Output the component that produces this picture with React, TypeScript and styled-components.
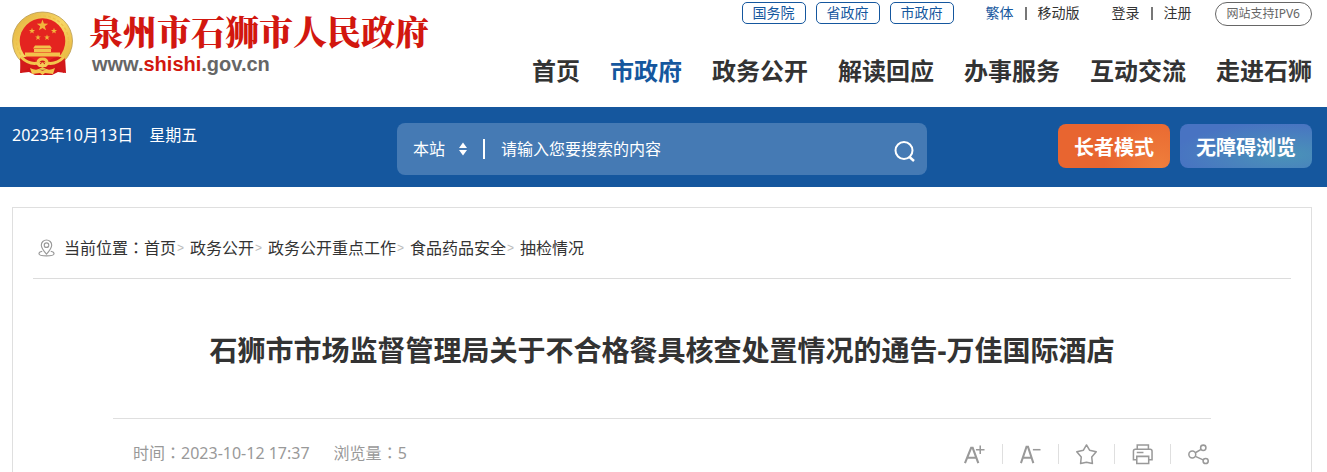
import React from "react";
import styled, { createGlobalStyle } from "styled-components";

const BLUE = "#15579e";

const GlobalStyle = createGlobalStyle`
  * { box-sizing: border-box; }
  body {
    margin: 0;
    background: #fff;
    color: #333;
    font: 16px/24px "Noto Sans", "Noto Sans CJK SC", sans-serif;
  }
  a { color: inherit; text-decoration: none; }
  button, input, select { font: inherit; color: inherit; }
`;

const Page = styled.div`
  display: flex;
  flex-direction: column;
  min-height: 100vh;
`;

const Header = styled.header`
  display: flex;
  justify-content: space-between;
  height: 107px;
  padding: 0 15px 0 12px;
`;

const Brand = styled.a`
  display: flex;
  align-items: flex-start;
  gap: 14px;
  padding-top: 11px;
`;

const BrandText = styled.div`
  display: flex;
  flex-direction: column;
  padding-top: 5px;
`;

const BrandName = styled.span`
  color: #d2170f;
  font-family: "Liberation Serif", "Noto Serif CJK SC", "Noto Sans CJK SC", serif;
  font-size: 34px;
  font-weight: 900;
  line-height: 36px;
  white-space: nowrap;
`;

const BrandUrl = styled.span`
  padding-left: 3px;
  color: #666;
  font: bold 20px/24px "Liberation Sans", sans-serif;

  em { color: #d2170f; font-style: normal; }
`;

const HeaderSide = styled.div`
  display: flex;
  flex-direction: column;
  align-items: flex-end;
`;

const TopBar = styled.div`
  display: flex;
  align-items: flex-start;
  padding-top: 2px;
  height: 53px;
  font-size: 14px;
  line-height: 22px;
  white-space: nowrap;
`;

const Levels = styled.div`
  display: flex;
  gap: 10px;
  margin-right: 32px;
`;

const LevelLink = styled.a`
  padding: 0 10px;
  border: 1px solid ${BLUE};
  border-radius: 5px;
  color: ${BLUE};
  line-height: 20px;
`;

const LinkPair = styled.div<{ $end: number }>`
  display: flex;
  align-items: center;
  gap: 11px;
  margin-right: ${(p) => p.$end}px;
`;

const TopLink = styled.a<{ $active?: boolean }>`
  color: ${(p) => (p.$active ? BLUE : "#333")};
`;

const Bar = styled.i<{ $height: number; $color: string; $width?: number }>`
  flex: none;
  width: ${(p) => p.$width ?? 1}px;
  height: ${(p) => p.$height}px;
  background: ${(p) => p.$color};
`;

const Ipv6 = styled.span`
  padding: 0 11px;
  border: 1px solid #666;
  border-radius: 12px;
  color: #666;
  font-size: 12px;
  line-height: 22px;
`;

const Nav = styled.nav`
  display: flex;
  gap: 30px;
  font-size: 24px;
  font-weight: 700;
  line-height: 36px;
  white-space: nowrap;
`;

const NavLink = styled.a<{ $active?: boolean }>`
  color: ${(p) => (p.$active ? BLUE : "#333")};
`;

const Band = styled.section`
  display: grid;
  grid-template-columns: 1fr 530px 1fr;
  align-items: start;
  height: 80px;
  padding: 16px 15px 0 12px;
  background: ${BLUE};
  color: #fff;
`;

const SearchForm = styled.form`
  display: flex;
  align-items: center;
  height: 52px;
  padding: 0 11px 0 16px;
  border-radius: 8px;
  background: #457ab4;
`;

const ScopeField = styled.label`
  display: flex;
  align-items: center;
  gap: 14px;
  margin-right: 16px;
`;

const Scope = styled.select`
  width: 32px;
  padding: 0;
  border: 0;
  appearance: none;
  background: none;
  outline: 0;

  option { color: #333; }
`;

const Query = styled.input`
  flex: 1;
  min-width: 0;
  margin: 0 16px;
  padding: 0;
  border: 0;
  background: none;
  outline: 0;

  &::placeholder { color: #fff; opacity: 1; }
`;

const IconButton = styled.button`
  display: flex;
  flex: none;
  padding: 0;
  border: 0;
  background: none;
  cursor: pointer;
`;

const SearchButton = styled(IconButton)`
  padding-top: 4px;
`;

const Modes = styled.div`
  display: flex;
  justify-content: flex-end;
  gap: 10px;
  padding-top: 1px;
`;

const ModeButton = styled.button<{ $fill: string }>`
  height: 44px;
  padding: 3px 16px 0;
  border: 0;
  border-radius: 8px;
  background: ${(p) => p.$fill};
  font-size: 20px;
  font-weight: 700;
  white-space: nowrap;
`;

const Main = styled.main`
  flex: 1;
  margin: 20px 15px 0 12px;
  padding: 0 20px;
  border: 1px solid #dfdfdf;
  border-bottom: 0;
`;

const Crumbs = styled.nav`
  display: flex;
  align-items: center;
  height: 71px;
  padding: 9px 5px 0;
  border-bottom: 1px solid #dcdcdc;
  white-space: nowrap;

  svg { margin-right: 9px; }
`;

const ColonText = styled.span`
  font-family: "Noto Sans CJK TC", sans-serif;
  line-height: 1;
`;

const Colon = () => <ColonText lang="zh-TW">：</ColonText>;

const Chevron = styled.span`
  width: 14px;
  padding-left: 1px;
  color: #bbb;
  font: 12px/24px "Liberation Sans", sans-serif;
`;

const Article = styled.article`
  padding: 0 80px;
`;

const Title = styled.h1`
  margin: 0;
  padding: 50px 0 47px;
  border-bottom: 1px solid #dfdfdf;
  font-size: 28px;
  font-weight: 700;
  line-height: 42px;
  text-align: center;
`;

const Meta = styled.div`
  display: flex;
  align-items: center;
  height: 50px;
  padding: 20px 2px 0 20px;
  color: #999;
  white-space: nowrap;
`;

const MetaItem = styled.span`
  margin-right: 24px;
  padding-bottom: 3px;
`;

const Tools = styled.div`
  display: flex;
  align-items: center;
  gap: 17px;
  margin-left: auto;
`;

const Star = ({ x, y, r }: { x: number; y: number; r: number }) => {
  const points = Array.from({ length: 10 }, (_, i) => {
    const radius = i % 2 ? r * 0.4 : r;
    const angle = (Math.PI / 5) * i - Math.PI / 2;
    return `${x + radius * Math.cos(angle)},${y + radius * Math.sin(angle)}`;
  }).join(" ");
  return <polygon points={points} fill="#f2b53c" />;
};

const Emblem = () => (
  <svg width="63" height="66" viewBox="0 0 63 66" aria-hidden="true">
    <defs>
      <linearGradient id="gold" x1="0" y1="0" x2="1" y2="1">
        <stop offset="0" stopColor="#dfae3c" />
        <stop offset="0.5" stopColor="#f8d765" />
        <stop offset="1" stopColor="#e3ae35" />
      </linearGradient>
    </defs>
    <path d="M9 46 8 62 17 61 23 64H40L46 61 54 62 53 46Z" fill="#cf1518" />
    <ellipse cx="30.5" cy="30" rx="30" ry="29" fill="url(#gold)" stroke="#b99a52" strokeWidth="0.8" />
    <ellipse cx="30.5" cy="30" rx="26" ry="25" fill="none" stroke="#edc04a" strokeWidth="1.4" strokeDasharray="3 2" />
    <circle cx="30.5" cy="30" r="22.8" fill="#e42420" />
    <Star x={30.5} y={14.5} r={6} />
    <Star x={20} y={20} r={3.2} />
    <Star x={42} y={20} r={3.2} />
    <Star x={26} y={26.5} r={3} />
    <Star x={35} y={26.5} r={3} />
    <path d="M23 34.500h15l2 3H21ZM22 38h17v3H22ZM13 41.500h35v4H13Z" fill="#f3c24b" />
    <path d="M8 47Q17 44 24 50L30.500 48 37 50Q44 44 53 47L52 62 44 57 38 60 30.500 56 23 60 17 57 9 62Z" fill="#d3191a" />
    <path d="M9 46q8 8 17 6 0-4 4.500-4t4.500 4q9 2 17-6" fill="none" stroke="#f3c54c" strokeWidth="3" />
    <path d="M24 53q6-4 13 0l-3 3h-7Z" fill="#f5cb55" />
    <path d="m28 53 2.500-2 2.500 2" fill="none" stroke="#d3191a" />
    <path d="M18 57q6 3 8.500 1l4 2 4-2q3 2 8.500-1l-2 6-8-1-2.500 2-2.500-2-8 1Z" fill="#f4c64d" />
  </svg>
);

const Sorter = () => (
  <svg width="8" height="14" viewBox="0 0 8 14" fill="#fff" aria-hidden="true">
    <path d="M4 0.500 8 6H0ZM4 13.500 8 8H0Z" />
  </svg>
);

const SearchIcon = () => (
  <svg width="22" height="22" viewBox="0 0 22 22" fill="none" stroke="#fff" strokeWidth="2" aria-hidden="true">
    <circle cx="10" cy="10.500" r="8.500" />
    <path d="m15.500 17 4.500 4" strokeWidth="2.400" />
  </svg>
);

const PinIcon = () => (
  <svg width="17" height="18" viewBox="0 0 18 18" fill="none" stroke="#999" strokeWidth="1.200" aria-hidden="true">
    <path d="M9 15.500C6 12 3.500 9 3.500 6a5.500 5.500 0 0 1 11 0c0 3-2.500 6-5.500 9.500Z" />
    <circle cx="9" cy="6" r="2.400" />
    <path d="M4.500 12.500C2 13 1 13.800 1 15c0 1.500 3 2.300 8 2.300s8-.8 8-2.300c0-1.200-1-2-3.500-2.500" />
  </svg>
);

const toolIcons: { label: string; drawing: React.ReactNode }[] = [
  {
    label: "放大字号",
    drawing: <><path d="M1 20.500 7.500 4.500h1.600L15 20.500M3.500 15h9.600" strokeWidth="2.200" /><path d="M12.500 6.500h9M17 2v9" /></>,
  },
  {
    label: "缩小字号",
    drawing: <><path d="M1 20.500 6.800 3.500h1.600L14 20.500M3.200 15h8.800" strokeWidth="2.100" /><path d="M13.500 6.500h8" /></>,
  },
  {
    label: "收藏",
    drawing: <path d="m11 1.500 3.200 5.500 7 1.700-4.700 5.500.7 6.800-6.200-1.300-6.200 1.300.7-6.800L.8 8.700l7-1.700Z" strokeLinejoin="round" />,
  },
  {
    label: "打印",
    drawing: <path d="M5.500 6V1.500h11.700V6M5 17H1.500V8Q1.500 6 3.500 6h15.500Q21 6 21 8v9h-3.500M5 13.500h12.500V21H5ZM5 9.500h7" />,
  },
  {
    label: "分享",
    drawing: <><circle cx="4.500" cy="11.500" r="3.600" /><circle cx="16" cy="4.500" r="2.800" /><circle cx="18.500" cy="18.300" r="2.700" /><path d="m7.700 9.700 6-3.500M7.700 13.500l8.200 3.700" /></>,
  },
];

const navItems = ["首页", "市政府", "政务公开", "解读回应", "办事服务", "互动交流", "走进石狮"];
const crumbs = ["首页", "政务公开", "政务公开重点工作", "食品药品安全", "抽检情况"];

export default function App() {
  return (
    <Page lang="zh-CN">
      <GlobalStyle />
      <Header>
        <Brand href="#">
          <Emblem />
          <BrandText>
            <BrandName>泉州市石狮市人民政府</BrandName>
            <BrandUrl>www.<em>shishi</em>.gov.cn</BrandUrl>
          </BrandText>
        </Brand>
        <HeaderSide>
          <TopBar>
            <Levels>
              {["国务院", "省政府", "市政府"].map((name) => (
                <LevelLink href="#" key={name}>{name}</LevelLink>
              ))}
            </Levels>
            <LinkPair $end={32}>
              <TopLink href="#" $active>繁体</TopLink>
              <Bar $height={13} $width={2} $color="#777" />
              <TopLink href="#">移动版</TopLink>
            </LinkPair>
            <LinkPair $end={23}>
              <TopLink href="#">登录</TopLink>
              <Bar $height={13} $width={2} $color="#777" />
              <TopLink href="#">注册</TopLink>
            </LinkPair>
            <Ipv6>网站支持IPV6</Ipv6>
          </TopBar>
          <Nav>
            {navItems.map((name) => (
              <NavLink href="#" key={name} $active={name === "市政府"}>{name}</NavLink>
            ))}
          </Nav>
        </HeaderSide>
      </Header>

      <Band>
        <time dateTime="2023-10-13">2023年10月13日　星期五</time>
        <SearchForm onSubmit={(e) => e.preventDefault()}>
          <ScopeField>
            <Scope aria-label="搜索范围">
              <option>本站</option>
            </Scope>
            <Sorter />
          </ScopeField>
          <Bar $height={20} $width={2} $color="#fff" />
          <Query type="text" aria-label="搜索" placeholder="请输入您要搜索的内容" />
          <SearchButton type="submit" aria-label="搜索"><SearchIcon /></SearchButton>
        </SearchForm>
        <Modes>
          <ModeButton type="button" $fill="radial-gradient(circle at 90% 100%, #ef7f3c, #e86530 50%)">长者模式</ModeButton>
          <ModeButton type="button" $fill="radial-gradient(ellipse at 80% 70%, #4a93b8, #4873c2 75%)">无障碍浏览</ModeButton>
        </Modes>
      </Band>

      <Main>
        <Crumbs aria-label="当前位置">
          <PinIcon />
          <span>当前位置<Colon /></span>
          {crumbs.map((name, i) => (
            <React.Fragment key={name}>
              {i > 0 && <Chevron>&gt;</Chevron>}
              <a href="#">{name}</a>
            </React.Fragment>
          ))}
        </Crumbs>
        <Article>
          <Title>石狮市市场监督管理局关于不合格餐具核查处置情况的通告-万佳国际酒店</Title>
          <Meta>
            <MetaItem>时间<Colon />2023-10-12 17:37</MetaItem>
            <MetaItem>浏览量<Colon />5</MetaItem>
            <Tools>
              {toolIcons.map((tool, i) => (
                <React.Fragment key={tool.label}>
                  {i > 0 && <Bar $height={20} $color="#dfdfdf" />}
                  <IconButton type="button" aria-label={tool.label}>
                    <svg width="21" height="22" viewBox="0 0 22 22" fill="none" stroke="#999" strokeWidth="1.600" aria-hidden="true">
                      {tool.drawing}
                    </svg>
                  </IconButton>
                </React.Fragment>
              ))}
            </Tools>
          </Meta>
        </Article>
      </Main>
    </Page>
  );
}
